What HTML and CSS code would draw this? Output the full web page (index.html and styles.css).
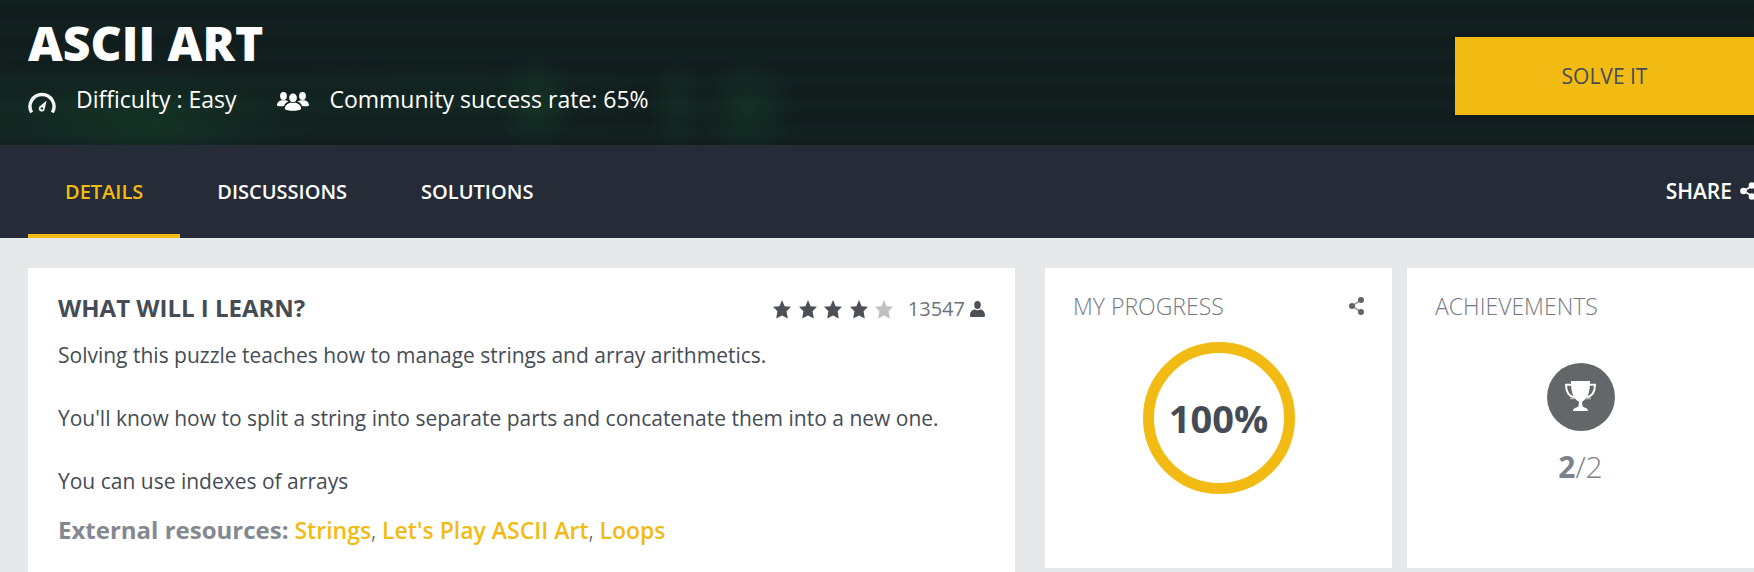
FILE: index.html
```html
<!DOCTYPE html>
<html lang="en">
<head>
<meta charset="utf-8">
<title>ASCII Art</title>
<link rel="stylesheet" href="styles.css">
</head>
<body>
<header class="hero">
  <div class="hero-info">
    <h1 class="title">ASCII ART</h1>
    <ul class="stats">
      <li class="stat">
        <svg class="icon-gauge" viewBox="0 0 28 24" aria-hidden="true">
          <path d="M3.600 22.500A12 12 0 1 1 24.400 22.500" fill="none" stroke="#f4f5f5" stroke-width="3.400"/>
          <path d="M18.600 10.500 16.600 19.400a3 3 0 1 1-5.300-2.600z" fill="#f4f5f5"/>
          <circle cx="13.900" cy="18.400" r="1.200" fill="#152820"/>
        </svg>
        <span>Difficulty : Easy</span>
      </li>
      <li class="stat">
        <svg class="icon-group" viewBox="0 0 32 19" fill="#fff" aria-hidden="true">
          <ellipse cx="6.500" cy="4" rx="3.400" ry="4"/>
          <ellipse cx="25.500" cy="4" rx="3.400" ry="4"/>
          <path d="M0 13.500C0 10 2.500 9 4.500 8.300h4c1 .400 2.300.800 3 1.300-2.500 1.200-3.500 2-4.500 4.400-3 .400-7 .400-7-.500zM32 13.500c0-3.500-2.500-4.500-4.500-5.200h-4c-1 .400-2.300.800-3 1.300 2.500 1.200 3.500 2 4.500 4.400 3 .400 7 .400 7-.500z"/>
          <ellipse cx="16" cy="5.800" rx="3.900" ry="4.400"/>
          <path d="M7.800 17c0-4.200 3-5.200 6-6.500q2.200 1 4.400 0c3 1.300 6 2.300 6 6.500-2 2.400-14.400 2.400-16.400 0z"/>
        </svg>
        <span>Community success rate: 65%</span>
      </li>
    </ul>
  </div>
  <button class="solve" type="button">SOLVE IT</button>
</header>
<nav class="nav">
  <div class="tabs">
    <a class="tab tab-active" href="#details" aria-current="page">DETAILS</a>
    <a class="tab" href="#discussions">DISCUSSIONS</a>
    <a class="tab" href="#solutions">SOLUTIONS</a>
  </div>
  <button class="share" type="button">SHARE
    <svg class="icon-share-nav" viewBox="0 0 14 18" fill="#fff" aria-hidden="true">
      <path d="M3.500 9 13 3.500M3.500 9 13 14.500" stroke="#fff" stroke-width="1.500"/>
      <circle cx="3.500" cy="9" r="3.300"/><circle cx="12" cy="3.500" r="3.300"/><circle cx="12" cy="14.500" r="3.300"/>
    </svg>
  </button>
</nav>
<main class="content">
  <section class="card learn">
    <div class="learn-head">
      <h2 class="learn-title">WHAT WILL I LEARN?</h2>
      <div class="rating">
        <svg class="stars" viewBox="0 0 120 19" role="img" aria-label="4 out of 5 stars">
          <defs><path id="star" d="M9 0 11.600 6.200 18 6.800 13.600 11.300 14.800 18.600 9 15.400 3.200 18.600 4.400 11.300 0 6.800 6.400 6.200z"/></defs>
          <g fill="#4d5157"><use href="#star"/><use href="#star" x="26"/><use href="#star" x="51"/><use href="#star" x="77"/></g>
          <use href="#star" x="102" fill="#bfc0c2"/>
        </svg>
        <span class="count">13547</span>
        <svg class="icon-user" viewBox="0 0 15 16" fill="#4d5157" aria-hidden="true">
          <ellipse cx="7.500" cy="4" rx="3.300" ry="4"/>
          <path d="M0 14.500C0 10.500 2.300 9.300 4.300 8.300q3.200 2 6.400 0c2 1 4.300 2.200 4.300 6.200 0 1-.500 1.500-1.500 1.500h-12Q0 16 0 14.500z"/>
        </svg>
      </div>
    </div>
    <p class="text">Solving this puzzle teaches how to manage strings and array arithmetics.</p>
    <p class="text">You'll know how to split a string into separate parts and concatenate them into a new one.</p>
    <p class="text">You can use indexes of arrays</p>
    <div class="resources"><strong class="resources-label">External resources:</strong> <a class="link" href="#strings">Strings</a>, <a class="link" href="#play">Let's Play ASCII Art</a>, <a class="link" href="#loops">Loops</a></div>
  </section>
  <section class="card side">
    <div class="side-head">
      <h2 class="side-title">MY PROGRESS</h2>
      <button class="share-small" type="button" aria-label="Share progress">
        <svg class="icon-share" viewBox="0 0 15 18" fill="#5f6468" aria-hidden="true">
          <path d="M3 9 12 3M3 9l9 6" stroke="#8a8d90" stroke-width="1.500"/>
          <circle cx="3" cy="9" r="3"/><circle cx="12" cy="3" r="3"/><circle cx="12" cy="15" r="3"/>
        </svg>
      </button>
    </div>
    <div class="ring">100%</div>
  </section>
  <section class="card side">
    <div class="side-head"><h2 class="side-title">ACHIEVEMENTS</h2></div>
    <div class="trophy">
      <svg class="icon-trophy" viewBox="0 0 68 68" aria-hidden="true">
        <circle cx="34" cy="34" r="34" fill="#636769"/>
        <path d="M25 21.800h-6c0 6 2.500 11.500 8.500 12.800M42 21.800h6c0 6-2.500 11.500-8.500 12.800" fill="none" stroke="#fff" stroke-width="2"/>
        <path d="M24 18h19v3c-.300 7-1.500 14-8 18l.500 4c.500 1.800 5.500 1.500 5.500 5H26c0-3.500 5-3.200 5.500-5l.500-4c-6.500-4-7.700-11-8-18z" fill="#fff"/>
        <path d="M23 35.500h5M39 35.500h5" stroke="#b5b7b8" stroke-width="1.500"/>
      </svg>
      <p class="score"><strong class="earned">2</strong>/2</p>
    </div>
  </section>
</main>
</body>
</html>
```
FILE: styles.css
```css
* { box-sizing: border-box; margin: 0; }

body {
  min-height: 100vh;
  background: #e7e8ea;
  color: #454c55;
  font-family: "Open Sans", "Noto Sans", sans-serif;
  font-size: 21px;
  overflow-x: hidden;
}

button { font: inherit; border: 0; cursor: pointer; }
a { text-decoration: none; }
svg { display: block; flex: none; }

.hero {
  display: flex;
  justify-content: space-between;
  align-items: flex-start;
  padding: 16px 0 29px 28px;
  background:
    radial-gradient(40px 50px at 536px 104px, #16402a88, transparent),
    radial-gradient(30px 50px at 678px 106px, #16402a66, transparent),
    radial-gradient(50px 56px at 748px 110px, #16402a88, transparent),
    radial-gradient(130px 50px at 160px 122px, #16402a66, transparent),
    radial-gradient(300px 60px at 80px 114px, #16402a66, transparent),
    radial-gradient(240px 44px at 440px 98px, #16402a44, transparent),
    repeating-linear-gradient(#122020 0 4px, #111c1d 12px 18px, #122020 26px);
}
.title {
  color: #fff;
  font-size: 48px;
  font-weight: 800;
  line-height: 54px;
}
.stats {
  display: flex;
  gap: 41px;
  padding: 0;
  margin-top: 13px;
  list-style: none;
  color: #fff;
  font-size: 23px;
  line-height: 33px;
}
.stat { display: flex; align-items: center; gap: 20px; }
.icon-gauge,
.icon-group { margin-top: 4px; }
.icon-gauge { width: 28px; height: 24px; }
.icon-group { width: 32px; height: 19px; }
.solve {
  width: 299px;
  height: 78px;
  margin-top: 21px;
  background: #f2bb13;
  color: #454c55;
  font-weight: 500;
}

.nav {
  display: flex;
  justify-content: space-between;
  padding-left: 28px;
  background: #252c38;
  font-weight: 600;
}
.tabs { display: flex; font-size: 20px; }
.tab {
  padding: 33px 37px 28px;
  border-bottom: 4px solid transparent;
  color: #fff;
  line-height: 28px;
}
.tab-active { border-color: #f2bb13; color: #f2bb13; }
.share {
  display: flex;
  align-items: center;
  gap: 8px;
  padding: 0 0 2px;
  background: none;
  color: #fff;
}
.icon-share-nav { width: 14px; height: 18px; }

.content {
  display: grid;
  grid-template-columns: 1002fr 347fr 347fr;
  align-items: start;
  column-gap: 15px;
  padding: 30px 0 0 28px;
}
.card { background: #fff; }
.learn { margin-right: 15px; min-height: 304px; padding: 24px 30px 16px; }
.learn-head { display: flex; justify-content: space-between; align-items: center; }
.learn-title { font-size: 24px; font-weight: 700; line-height: 32px; }
.rating { display: flex; align-items: center; padding-top: 2px; color: #6b727b; line-height: 30px; }
.stars { width: 120px; height: 19px; margin-right: 15px; }
.count { font-size: 20px; }
.icon-user { width: 15px; height: 16px; margin-left: 5px; }
.text { margin-top: 15px; font-size: 21px; line-height: 32px; }
.text + .text { margin-top: 31px; }
.resources { margin-top: 15px; font-size: 23px; font-weight: 300; line-height: 36px; }
.resources-label { color: #838891; font-size: 24px; font-weight: 700; }
.link { color: #f2bb13; font-weight: 600; }

.side { min-height: 300px; padding: 22px 28px; }
.side-head { display: flex; justify-content: space-between; align-items: center; }
.side-title { color: #747a84; font-size: 23px; font-weight: 300; line-height: 32px; }
.share-small { padding: 0; background: none; }
.icon-share { width: 15px; height: 18px; }
.ring {
  display: grid;
  place-items: center;
  width: 152px;
  height: 152px;
  margin: 20px auto 0;
  border: 11px solid #f2bb13;
  border-radius: 50%;
  font-size: 38px;
  font-weight: 700;
}
.trophy { display: grid; justify-items: center; margin-top: 41px; }
.icon-trophy { width: 68px; height: 68px; }
.score { margin-top: 16px; color: #7d838b; font-size: 30px; font-weight: 300; line-height: 40px; }
.earned { font-weight: 700; }
```
